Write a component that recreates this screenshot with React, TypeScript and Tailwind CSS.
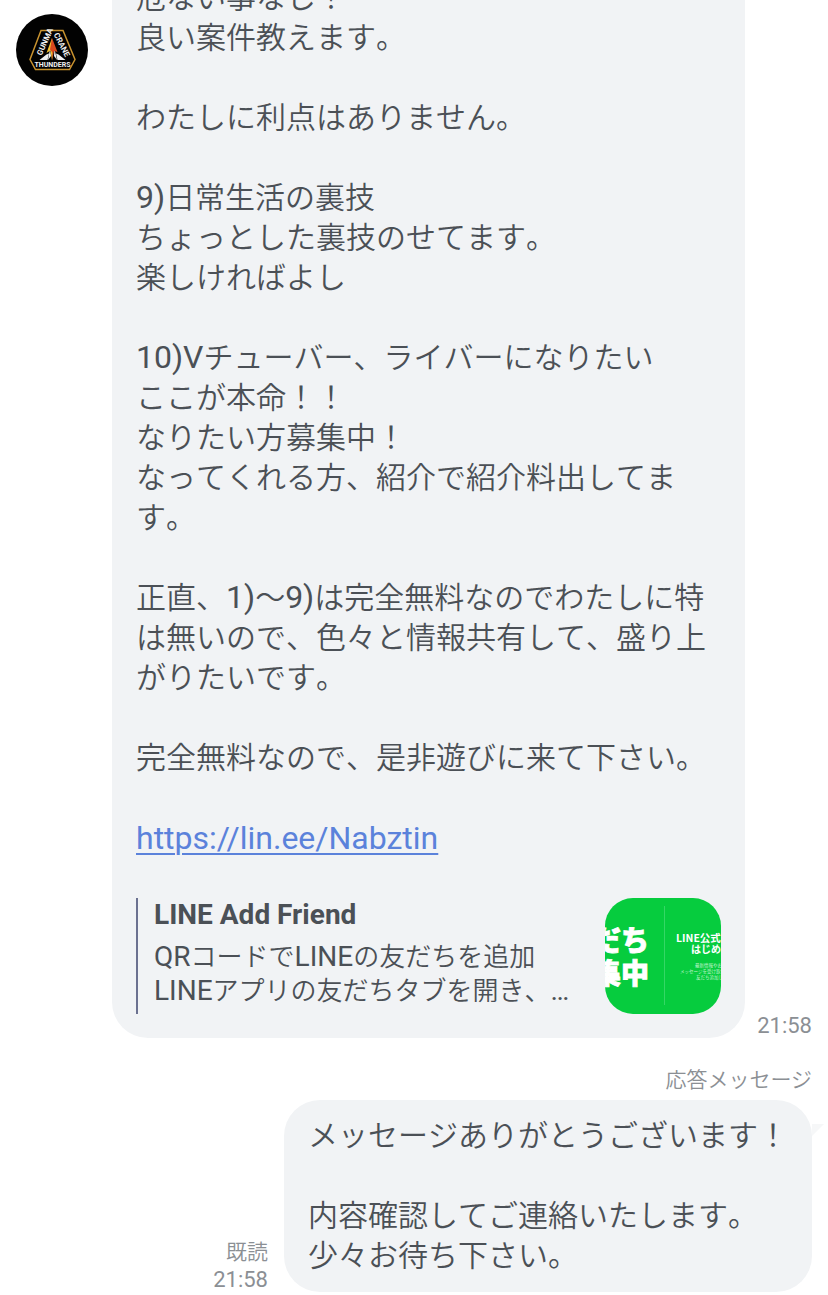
import type { ReactNode } from 'react';

const longMessage = `危ない事なし！
良い案件教えます。

わたしに利点はありません。

9)日常生活の裏技
ちょっとした裏技のせてます。
楽しければよし

10)Vチューバー、ライバーになりたい
ここが本命！！
なりたい方募集中！
なってくれる方、紹介で紹介料出してます。

正直、1)〜9)は完全無料なのでわたしに特は無いので、色々と情報共有して、盛り上がりたいです。

完全無料なので、是非遊びに来て下さい。`;

const reply = `メッセージありがとうございます！

内容確認してご連絡いたします。
少々お待ち下さい。`;

const preview = `QRコードでLINEの友だちを追加
LINEアプリの友だちタブを開き、…`;

// Latin runs are set a little larger and heavier than the kana and kanji around them
function Mixed({ text, latin }: { text: string; latin: string }) {
  return text.split(/([A-Za-z0-9)…]+)/).map((part, i) =>
    i % 2 ? (
      <span key={i} className={latin}>
        {part}
      </span>
    ) : (
      part
    ),
  );
}

function Avatar() {
  return (
    <svg viewBox="0 0 72 72" className="size-[72px] shrink-0" role="img" aria-label="Gunma Crane Thunders">
      <circle cx="36" cy="36" r="36" fill="#020202" />
      <path d="M25 16.500h22l12 29-5.500 10H19.500l-5.500-10z" fill="none" stroke="#c8922f" strokeWidth="1.500" />
      <g fill="#f0f0f0" fontFamily="'Liberation Sans Narrow', Roboto, sans-serif" fontWeight="700">
        <text x="36.500" y="53" fontSize="7" textAnchor="middle">
          THUNDERS
        </text>
        <text transform="translate(25.500 42) rotate(-66)" fontSize="8">GUNMA</text>
        <text transform="translate(37.500 20.500) rotate(63)" fontSize="8">CRANE</text>
      </g>
      <path d="M23.500 46l7-5.500 2.500-1-1.500 6.500zM49.500 46l-7-5.500-2.500-1 1.500 6.500z" fill="#f2f2f2" />
      <path d="M34 35l-2 11 3-4zM38.500 35l2.500 11-3-4z" fill="#f2f2f2" />
      <path d="M36 24l-5.500 15 4-2.500 1.500 10 1-6z" fill="#f3c02f" />
      <path d="M36 24l5.500 14-3.500-1-2 9.500.500-8-2.500-3z" fill="#d9481f" />
    </svg>
  );
}

function Thumbnail() {
  return (
    <svg viewBox="0 0 116 116" className="size-[116px] shrink-0 rounded-[28px]" role="img" aria-label="LINE">
      <rect width="116" height="116" fill="#06cc3e" />
      <path d="M59.500 8v99" stroke="#35d765" strokeWidth="1" />
      <g fill="#fff" stroke="#fff" strokeWidth="0.800" fontFamily="'Noto Sans CJK JP', sans-serif" fontWeight="900">
        <text x="44" y="53" fontSize="28" textAnchor="end">だち</text>
        <text x="44" y="86" fontSize="28" textAnchor="end">集中</text>
      </g>
      <g fill="#fff" fontFamily="'Noto Sans CJK JP', sans-serif" fontWeight="700">
        <text x="71" y="44" fontSize="10.500">LINE公式ア</text>
        <text x="86" y="55" fontSize="10">はじめま</text>
      </g>
      <g fill="#c4f5d1" fontFamily="'Noto Sans CJK JP', sans-serif" fontSize="4.500">
        <text x="90" y="69">最新情報やお得</text>
        <text x="75" y="75">メッセージを受け取れま</text>
        <text x="91" y="81">友だち追加して</text>
      </g>
    </svg>
  );
}

function Meta({ children }: { children: ReactNode }) {
  return (
    <div className="flex shrink-0 flex-col items-end gap-1 text-[22px] leading-6 text-[#8b8f94]">{children}</div>
  );
}

function LinkPreview() {
  return (
    <a href="https://lin.ee/Nabztin" className="mt-10 flex justify-between">
      <div className="min-w-0 border-l-2 border-[#6b7190] pl-4">
        <div className="text-[28px] leading-[34px] font-bold">LINE Add Friend</div>
        <p className="mt-2 text-[26px] leading-[34px] font-[350] whitespace-pre-line [font-kerning:none]">
          <Mixed text={preview} latin="text-[28px] leading-none font-normal" />
        </p>
      </div>
      <Thumbnail />
    </a>
  );
}

export default function App() {
  return (
    <main className="overflow-hidden bg-white font-[Roboto,'Noto_Sans_CJK_JP',sans-serif] text-[#4b5056]" lang="ja">
      <section className="-mt-[22px] flex px-4">
        <div className="mr-6 pt-9">
          <Avatar />
        </div>
        <div className="min-w-0 flex-1 rounded-b-[36px] bg-[#f1f3f5] px-6 pb-6">
          <p className="text-[30px] leading-10 font-[350] whitespace-pre-line [font-kerning:none]">
            <Mixed text={longMessage} latin="text-[32px] leading-none font-normal" />
          </p>
          <a
            href="https://lin.ee/Nabztin"
            className="mt-10 block text-[32px] leading-10 text-[#5b82db] underline decoration-2 underline-offset-4"
          >
            https://lin.ee/Nabztin
          </a>
          <LinkPreview />
        </div>
        <div className="ml-3 flex items-end">
          <Meta>
            <time>21:58</time>
          </Meta>
        </div>
      </section>

      <section className="mt-7 flex flex-col items-end px-4">
        <div className="mb-1.5 text-[21px] leading-7 font-[350] text-[#8b8f94]">応答メッセージ</div>
        <div className="flex items-end gap-4">
          <Meta>
            <span className="text-[21px] font-[350]">既読</span>
            <time>21:58</time>
          </Meta>
          <div className="relative rounded-[36px] bg-[#f1f3f5] px-6 py-4">
            <p className="text-[30px] leading-10 font-[350] whitespace-pre-line [font-kerning:none]">{reply}</p>
            <svg viewBox="0 0 12 12" className="absolute top-6 left-full size-3" aria-hidden="true">
              <path d="M0 0h12L0 12z" fill="#f6f7f8" />
            </svg>
          </div>
        </div>
      </section>
    </main>
  );
}
